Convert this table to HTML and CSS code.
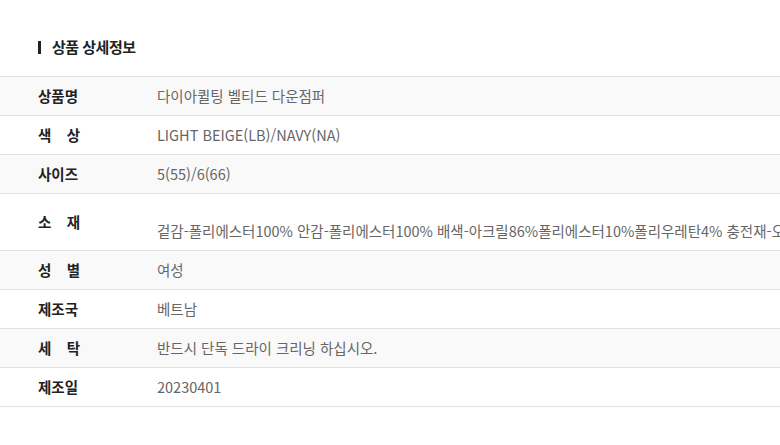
FILE: index.html
```html
<!DOCTYPE html>
<html lang="ko">
<head>
<meta charset="utf-8">
<link rel="stylesheet" href="styles.css">
</head>
<body>
<div class="page">
  <h2 class="title"><span class="bar"></span>상품 상세정보</h2>
  <table class="info">
    <tr class="alt"><th><span class="lbl">상품명</span></th><td>다이아퀼팅 벨티드 다운점퍼</td></tr>
    <tr><th><span class="lbl">색 상</span></th><td>LIGHT BEIGE(LB)/NAVY(NA)</td></tr>
    <tr class="alt"><th><span class="lbl">사이즈</span></th><td>5(55)/6(66)</td></tr>
    <tr class="tall"><th><span class="lbl">소 재</span></th><td><span class="low">겉감-폴리에스터100% 안감-폴리에스터100% 배색-아크릴86%폴리에스터10%폴리우레탄4% 충전재-오리솜털80% 오리깃털20%</span></td></tr>
    <tr class="alt"><th><span class="lbl">성 별</span></th><td>여성</td></tr>
    <tr><th><span class="lbl">제조국</span></th><td>베트남</td></tr>
    <tr class="alt"><th><span class="lbl">세 탁</span></th><td>반드시 단독 드라이 크리닝 하십시오.</td></tr>
    <tr><th><span class="lbl">제조일</span></th><td>20230401</td></tr>
  </table>
</div>
</body>
</html>
```
FILE: styles.css
```css
html, body {
  margin: 0;
  padding: 0;
  background: #fff;
  overflow: hidden;
}
.page {
  width: 1200px;
  padding-top: 36px;
  font-family: "Noto Sans CJK KR", "Noto Sans", sans-serif;
}
.title {
  display: flex;
  align-items: center;
  gap: 11px;
  margin: 0 0 18px 38px;
  font-size: 15px;
  font-weight: 700;
  color: #222;
  line-height: 22px;
  letter-spacing: -0.5px;
}
.bar {
  width: 3px;
  height: 13px;
  background: #222;
}
.info {
  width: 100%;
  border-collapse: collapse;
  border-top: 1px solid #e2e2e2;
}
.info tr {
  border-bottom: 1px solid #e2e2e2;
  height: 39px;
}
.info tr.alt {
  background: #f9f9f9;
}
.info tr.tall {
  height: 57px;
}
.info th {
  width: 119px;
  padding: 0 0 1px 38px;
  text-align: left;
  font-size: 14.5px;
  font-weight: 700;
  color: #222;
}
.lbl {
  display: inline-block;
  width: 42px;
  text-align: justify;
  text-align-last: justify;
}
.info td {
  padding: 0 0 1px 0;
  font-size: 14.5px;
  font-weight: 400;
  color: #666;
  white-space: nowrap;
  letter-spacing: 0;
}
.low {
  display: inline-block;
  padding-top: 18px;
}
```
